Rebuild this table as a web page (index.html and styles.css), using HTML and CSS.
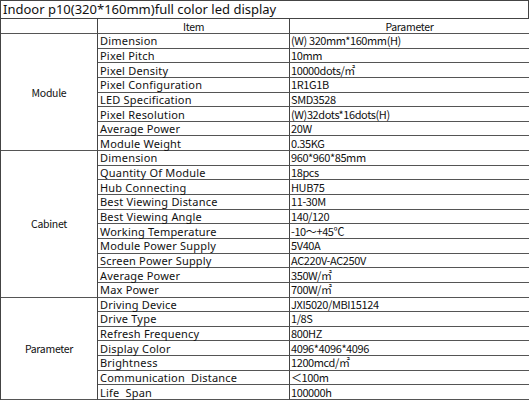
FILE: index.html
```html
<!DOCTYPE html>
<html>
<head>
<meta charset="utf-8">
<link rel="stylesheet" href="styles.css">
</head>
<body>
<div class="sheet">
  <div class="title">Indoor p10(320*160mm)full color led display</div>
  <div class="grid">
    <div class="cell"></div>
    <div class="cell head">Item</div>
    <div class="cell head">Parameter</div>

    <div class="cell group g-module">Module</div>
    <div class="cell k">Dimension</div><div class="cell v">(W) 320mm*160mm(H)</div>
    <div class="cell k">Pixel Pitch</div><div class="cell v">10mm</div>
    <div class="cell k">Pixel Density</div><div class="cell v">10000dots/㎡</div>
    <div class="cell k">Pixel Configuration</div><div class="cell v">1R1G1B</div>
    <div class="cell k">LED Specification</div><div class="cell v">SMD3528</div>
    <div class="cell k">Pixel Resolution</div><div class="cell v">(W)32dots*16dots(H)</div>
    <div class="cell k">Average Power</div><div class="cell v">20W</div>
    <div class="cell k">Module Weight</div><div class="cell v">0.35KG</div>

    <div class="cell group g-cabinet">Cabinet</div>
    <div class="cell k">Dimension</div><div class="cell v">960*960*85mm</div>
    <div class="cell k">Quantity Of Module</div><div class="cell v">18pcs</div>
    <div class="cell k">Hub Connecting</div><div class="cell v">HUB75</div>
    <div class="cell k">Best Viewing Distance</div><div class="cell v">11-30M</div>
    <div class="cell k">Best Viewing Angle</div><div class="cell v">140/120</div>
    <div class="cell k">Working Temperature</div><div class="cell v">-10～+45℃</div>
    <div class="cell k">Module Power Supply</div><div class="cell v">5V40A</div>
    <div class="cell k">Screen Power Supply</div><div class="cell v">AC220V-AC250V</div>
    <div class="cell k">Average Power</div><div class="cell v">350W/㎡</div>
    <div class="cell k">Max Power</div><div class="cell v">700W/㎡</div>

    <div class="cell group g-param">Parameter</div>
    <div class="cell k">Driving Device</div><div class="cell v">JXI5020/MBI15124</div>
    <div class="cell k">Drive Type</div><div class="cell v">1/8S</div>
    <div class="cell k">Refresh Frequency</div><div class="cell v">800HZ</div>
    <div class="cell k">Display Color</div><div class="cell v">4096*4096*4096</div>
    <div class="cell k">Brightness</div><div class="cell v">1200mcd/㎡</div>
    <div class="cell k">Communication&nbsp; Distance</div><div class="cell v">＜100m</div>
    <div class="cell k">Life&nbsp; Span</div><div class="cell v">100000h</div>
  </div>
</div>
</body>
</html>
```
FILE: styles.css
```css
* { box-sizing: border-box; }
html, body { margin: 0; padding: 0; background: #fff; }
body {
  font-family: "Noto Sans", "Noto Sans CJK KR", sans-serif;
  color: #111;
  width: 529px;
  height: 400px;
  overflow: hidden;
}
.sheet { width: 529px; }
.title {
  height: 19px;
  border: 1px solid #444;
  font-size: 13px;
  line-height: 16px;
  padding-left: 2px;
  white-space: nowrap;
}
.grid {
  display: grid;
  grid-template-columns: 97px 192px 240px;
  grid-template-rows: 15px repeat(25, 14.65px);
  border-left: 1px solid #444;
}
.cell {
  border-right: 1px solid #444;
  border-bottom: 1px solid #555;
  font-size: 11px;
  line-height: 13px;
  padding-left: 2px;
  white-space: nowrap;
  display: flex;
  align-items: center;
}
.k { letter-spacing: 0.2px; }
.v {
  font-family: "Noto Sans CJK KR", "Noto Sans", sans-serif;
  letter-spacing: -0.4px;
  padding-left: 1px;
}
.head, .group {
  justify-content: center;
  padding-left: 0;
  font-family: "Noto Sans CJK KR", "Noto Sans", sans-serif;
  font-size: 10.5px;
  letter-spacing: -0.3px;
}
.g-module { grid-row: span 8; }
.g-cabinet { grid-row: span 10; }
.g-param { grid-row: span 7; }
```
